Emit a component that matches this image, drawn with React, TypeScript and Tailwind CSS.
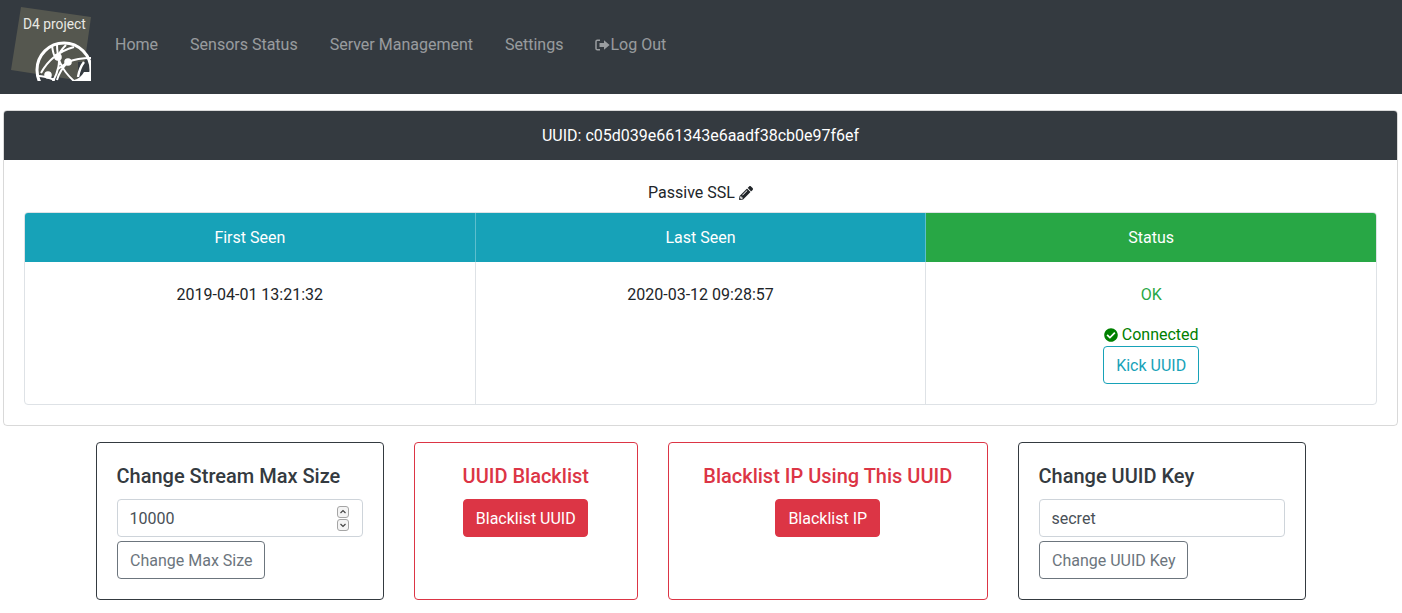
import React from 'react';

const NavLink = ({ children }: { children: React.ReactNode }) => (
  <a className="flex items-center px-2 pb-1 text-white/50 text-base leading-6">{children}</a>
);

const Logo = () => (
  <svg width="92" height="94" viewBox="0 0 92 94" className="shrink-0">
    <polygon points="21,7 91,17 82,81 11,70" fill="#55574f" />
    <text x="23" y="29" fill="#e9e9e4" fontSize="13.8" fontFamily="Roboto, sans-serif">D4 project</text>
    <clipPath id="logo-clip"><rect x="30" y="38" width="61" height="43" /></clipPath>
    <g clipPath="url(#logo-clip)" fill="none" stroke="#fff" strokeWidth="2">
      <rect x="78" y="62" width="14" height="20" fill="#343a40" stroke="none" />
      <circle cx="64" cy="70" r="27" strokeWidth="3" />
      <path d="M41 73C48 60 60 51 74 47M52 45c1 10 4 16 6 12 2 4 1 14-6 26M57 44c0 12 2 24 18 38M39 76c6 0 10 2 16 4M58 69l10-7c7-3 15-4 23-4M68 62c-5 5-9 11-11 18M66 45c-4 4-7 8-8 12" />
      <path d="M74 80c4-1 8-4 10-8l7 0v10H74z" fill="#fff" stroke="none" />
      <path d="M84 62c-3 4-5 9-6 15" strokeWidth="2.4" />
      <circle cx="58" cy="57" r="2.8" fill="#fff" />
      <circle cx="68" cy="62" r="2.8" fill="#fff" />
      <circle cx="48" cy="75" r="2.8" fill="#fff" />
    </g>
  </svg>
);

const LogOutIcon = () => (
  <svg width="15" height="12" viewBox="0 0 15 12" className="shrink-0">
    <path d="M5 1.2H2.4A1.4 1.4 0 0 0 1 2.6v6.8a1.4 1.4 0 0 0 1.4 1.4H5" fill="none" stroke="currentColor" strokeWidth="1.5" />
    <path d="M4.5 4h4.5V1.2L14.6 6 9 10.8V8H4.5z" fill="currentColor" />
  </svg>
);

const PencilIcon = () => (
  <svg width="14" height="14" viewBox="0 0 512 512" fill="#212529" className="shrink-0">
    <path d="M497.9 142.1l-46.1 46.1c-4.7 4.7-12.3 4.7-17 0l-111-111c-4.7-4.7-4.7-12.3 0-17l46.1-46.1c18.7-18.7 49.1-18.7 67.9 0l60.1 60.1c18.8 18.7 18.8 49.1 0 67.9zM284.2 99.8L21.6 362.4.4 483.9c-2.9 16.4 11.4 30.6 27.8 27.8l121.5-21.3 262.6-262.6c4.7-4.7 4.7-12.3 0-17l-111-111c-4.8-4.7-12.4-4.7-17.1 0zM124.1 339.9c-5.5-5.5-5.5-14.3 0-19.8l154-154c5.5-5.5 14.3-5.5 19.8 0s5.5 14.3 0 19.8l-154 154c-5.5 5.5-14.3 5.5-19.8 0zM88 424h48v36.3l-64.5 11.3-31.1-31.1L51.7 376H88v48z" />
  </svg>
);

const CheckCircleIcon = () => (
  <svg width="14" height="14" viewBox="0 0 512 512" fill="#008000" className="shrink-0">
    <path d="M504 256c0 137-111 248-248 248S8 393 8 256 119 8 256 8s248 111 248 248zM227.3 387.3l184-184c6.2-6.2 6.2-16.4 0-22.6l-22.6-22.6c-6.2-6.2-16.4-6.2-22.6 0L216 308.1l-70.1-70.1c-6.2-6.2-16.4-6.2-22.6 0l-22.6 22.6c-6.2 6.2-6.2 16.4 0 22.6l104 104c6.2 6.2 16.4 6.2 22.6 0z" />
  </svg>
);

const Stepper = () => (
  <div className="flex flex-col gap-px">
    <svg width="12" height="12" viewBox="0 0 12 12">
      <rect x="0.5" y="0.5" width="11" height="11" rx="2.5" fill="#f4f4f4" stroke="#a5a5a5" />
      <path d="M3.5 7l2.5-2.5L8.5 7" fill="none" stroke="#444" strokeWidth="1.2" />
    </svg>
    <svg width="12" height="12" viewBox="0 0 12 12">
      <rect x="0.5" y="0.5" width="11" height="11" rx="2.5" fill="#f4f4f4" stroke="#a5a5a5" />
      <path d="M3.5 5l2.5 2.5L8.5 5" fill="none" stroke="#444" strokeWidth="1.2" />
    </svg>
  </div>
);

const Cell = ({ children, last }: { children: React.ReactNode; last?: boolean }) => (
  <div className={`flex-1 px-5 pt-[21px] flex flex-col items-center text-center ${last ? '' : 'border-r border-[#dee2e6]'}`}>
    {children}
  </div>
);

const HeadCell = ({ children, color, last }: { children: React.ReactNode; color: string; last?: boolean }) => (
  <div className={`flex-1 h-[49px] flex items-center justify-center text-white ${color} ${last ? '' : 'border-r border-white/30'}`}>
    {children}
  </div>
);

const OutlineButton = ({ children }: { children: React.ReactNode }) => (
  <button className="self-start h-[38px] pl-3 pr-[11.5px] pt-[2px] rounded border border-[#6c757d] text-[#6c757d] text-base">{children}</button>
);

const DangerButton = ({ children }: { children: React.ReactNode }) => (
  <button className="h-[38px] pl-3 pr-[11.5px] pt-[2px] mr-px rounded bg-[#dc3545] border border-[#dc3545] text-white text-base">{children}</button>
);

const titleClass = 'text-xl leading-6 font-medium pt-px mb-[11px] -ml-[0.5px]';

export default function App() {
  return (
    <div className="w-[1402px] h-[613px] overflow-hidden bg-white text-[#212529] text-base leading-6 font-['Roboto',sans-serif]">
      <nav className="h-[94px] bg-[#343a40] flex">
        <Logo />
        <div className="flex gap-4 ml-[15px]">
          <NavLink>Home</NavLink>
          <NavLink>Sensors Status</NavLink>
          <NavLink>Server Management</NavLink>
          <NavLink>Settings</NavLink>
          <NavLink><LogOutIcon />Log Out</NavLink>
        </div>
      </nav>

      <div className="mx-[3px] w-[1395px] mt-4 border border-black/15 rounded">
        <div className="h-[49px] bg-[#343a40] text-white flex items-center justify-center rounded-t-[3px]">
          UUID: c05d039e661343e6aadf38cb0e97f6ef
        </div>
        <div className="p-5">
          <div className="h-[32px] flex items-start justify-center gap-1 pt-px">
            <span>Passive SSL</span>
            <span className="h-6 flex items-center"><PencilIcon /></span>
          </div>
          <div className="border border-[#dee2e6] rounded overflow-hidden">
            <div className="flex">
              <HeadCell color="bg-[#17a2b8]">First Seen</HeadCell>
              <HeadCell color="bg-[#17a2b8]">Last Seen</HeadCell>
              <HeadCell color="bg-[#28a745]" last>Status</HeadCell>
            </div>
            <div className="flex h-[142px]">
              <Cell>2019-04-01 13:21:32</Cell>
              <Cell>2020-03-12 09:28:57</Cell>
              <Cell last>
                <span className="text-[#28a745]">OK</span>
                <span className="mt-4 -mb-px flex items-center gap-1 text-[#008000]"><CheckCircleIcon />Connected</span>
                <button className="h-[38px] px-3 pt-[2px] rounded border border-[#17a2b8] text-[#17a2b8]">Kick UUID</button>
              </Cell>
            </div>
          </div>
        </div>
      </div>

      <div className="mt-4 flex justify-center gap-[30px]">
        <div className="w-[288px] h-[158px] border border-[#343a40] rounded p-5 flex flex-col">
          <h5 className={`${titleClass} text-[#343a40]`}>Change Stream Max Size</h5>
          <div className="h-[38px] border border-[#ced4da] rounded pl-3 pr-[13px] flex items-center justify-between text-[#495057]">
            <span className="pt-[2px] -ml-[0.5px]">10000</span>
            <Stepper />
          </div>
          <div className="mt-1 flex"><OutlineButton>Change Max Size</OutlineButton></div>
        </div>

        <div className="w-[224px] h-[158px] border border-[#dc3545] rounded p-5 flex flex-col items-center">
          <h5 className={`${titleClass} text-[#dc3545]`}>UUID Blacklist</h5>
          <DangerButton>Blacklist UUID</DangerButton>
        </div>

        <div className="w-[320px] h-[158px] border border-[#dc3545] rounded p-5 flex flex-col items-center">
          <h5 className={`${titleClass} text-[#dc3545]`}>Blacklist IP Using This UUID</h5>
          <DangerButton>Blacklist IP</DangerButton>
        </div>

        <div className="w-[288px] h-[158px] border border-[#343a40] rounded p-5 flex flex-col">
          <h5 className={`${titleClass} text-[#343a40]`}>Change UUID Key</h5>
          <div className="h-[38px] border border-[#ced4da] rounded px-3 flex items-center text-[#495057]"><span className="pt-[2px] -ml-[0.5px]">secret</span></div>
          <div className="mt-1 flex"><OutlineButton>Change UUID Key</OutlineButton></div>
        </div>
      </div>
    </div>
  );
}
